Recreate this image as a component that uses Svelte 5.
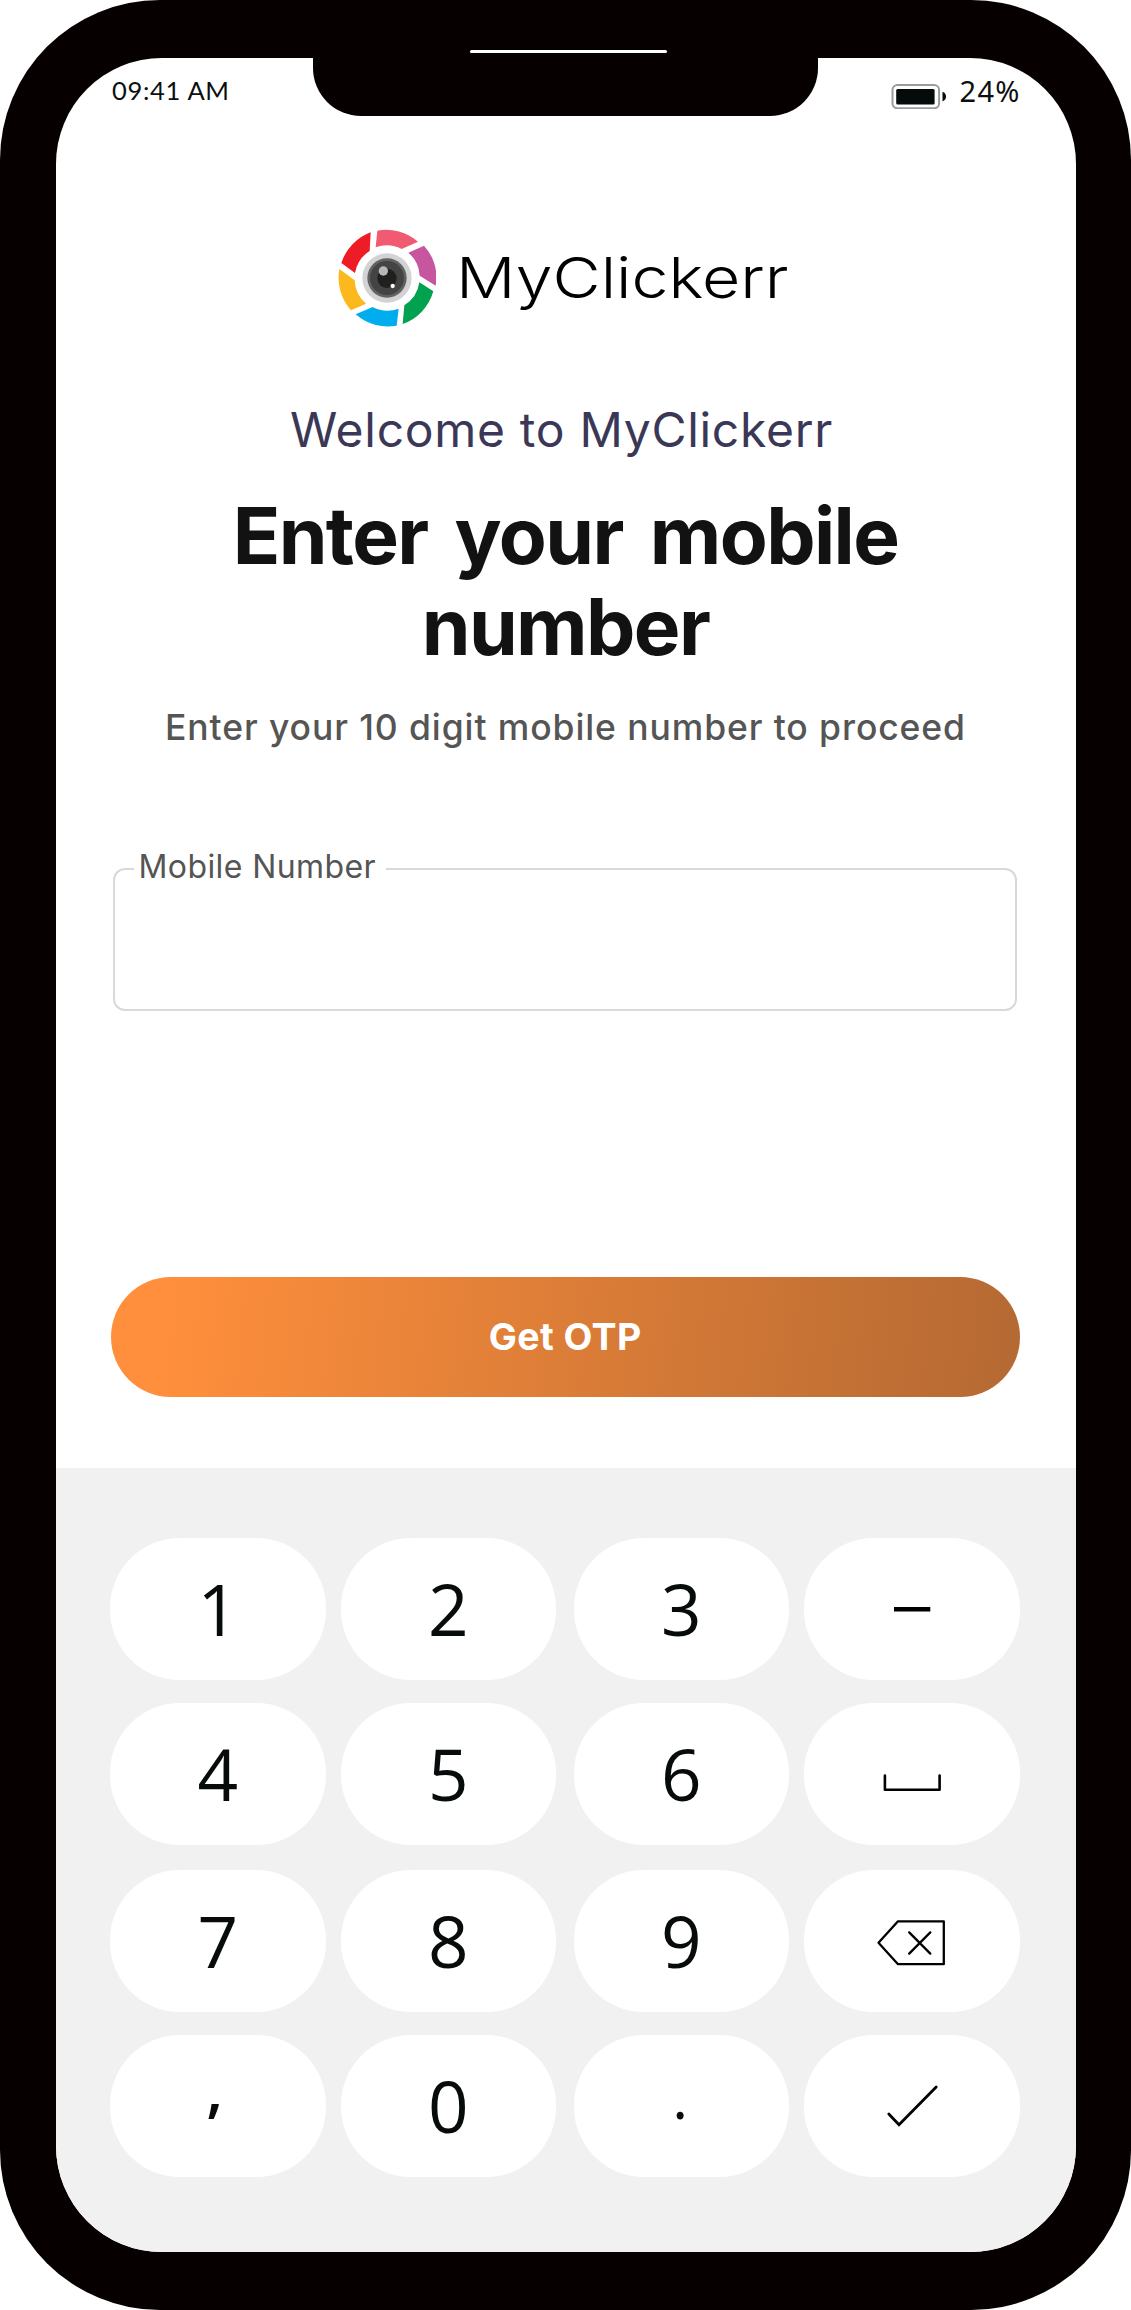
<script>
  const blades = [
    { color: '#ee1c25', d: 'M150 66A146 146 0 0 0 62 158L103 188A97 97 0 0 1 147 122Z' },
    { color: '#f05b72', d: 'M170 61A146 146 0 0 1 292 94L243 116A97 97 0 0 0 165 111Z' },
    { color: '#c6579f', d: 'M310 106A146 146 0 0 1 345 226L297 196A97 97 0 0 0 263 127Z' },
    { color: '#00a14f', d: 'M338 243A146 146 0 0 1 246 341L251 285A97 97 0 0 0 296 216Z' },
    { color: '#00adee', d: 'M228 346A146 146 0 0 1 105 312L156 290A97 97 0 0 0 234 295Z' },
    { color: '#fbb91d', d: 'M91 300A146 146 0 0 1 56 176L102 210A97 97 0 0 0 136 280Z' },
  ];

  const rows = [
    ['1', '2', '3', 'minus'],
    ['4', '5', '6', 'space'],
    ['7', '8', '9', 'backspace'],
    [',', '0', '.', 'enter'],
  ];

  // Each icon is drawn in a 90 x 60 box centred on its key.
  const icons = {
    minus: { d: 'M27 30.2H63.3', width: 4.4, cap: 'butt' },
    space: { d: 'M17.9 31.5V45.7H72.6V31.5', width: 2.6, cap: 'round' },
    backspace: {
      d: 'M11.5 31.7L31 10.3H76.8V53.2H31ZM42.2 21.4L63.3 42.6M63.3 21.4L42.2 42.6',
      width: 2.3,
      cap: 'round',
    },
    enter: { d: 'M21.8 38L32 48.8L69.2 11', width: 2.8, cap: 'round' },
  };
</script>

<main class="phone">
  <div class="screen">
    <header class="status">
      <span class="time">09:41 AM</span>
      <div class="power">
        <svg class="battery" viewBox="0 0 56 26" aria-hidden="true">
          <rect x="1.5" y="1.9" width="46.6" height="23.4" rx="5" fill="none" stroke="#9c9c9c" stroke-width="2" />
          <rect x="5.2" y="6" width="38.4" height="15.4" rx="1.5" fill="#050a0a" />
          <path d="M51.5 8.8Q55 10 55 13.6T51.5 18.4Z" fill="#050a0a" />
        </svg>
        <span class="percent">24%</span>
      </div>
    </header>

    <div class="brand">
      <svg class="wheel" viewBox="52 56 294 294" aria-hidden="true">
        {#each blades as blade}
          <path d={blade.d} fill={blade.color} />
        {/each}
        <circle cx="199" cy="203" r="74" fill="#d3d3d5" />
        <circle cx="199" cy="203" r="59" fill="#626262" />
        <circle cx="199" cy="203" r="51" fill="#444" />
        <circle cx="199" cy="204" r="29" fill="#20201e" />
        <circle cx="188" cy="182" r="14" fill="#b7b7b8" />
        <circle cx="216" cy="227" r="6.5" fill="#fff" />
      </svg>
      <span class="wordmark">MyClickerr</span>
    </div>

    <p class="welcome">Welcome to MyClickerr</p>
    <h1>Enter your mobile number</h1>
    <p class="hint">Enter your 10 digit mobile number to proceed</p>

    <div class="field"><span class="label">Mobile Number</span></div>

    <button class="submit">Get OTP</button>

    <section class="keypad">
      {#each rows as row}
        {#each row as key}
          <div class="key" class:dot={key === '.'} class:comma={key === ','}>
            {#if icons[key]}
              <svg class="icon" viewBox="0 0 90 60" aria-label={key}>
                <path
                  d={icons[key].d}
                  fill="none"
                  stroke="#000"
                  stroke-width={icons[key].width}
                  stroke-linecap={icons[key].cap}
                  stroke-linejoin={key === 'enter' ? 'miter' : 'round'}
                />
              </svg>
            {:else}
              {key}
            {/if}
          </div>
        {/each}
      {/each}
    </section>
  </div>
  <div class="notch"><span class="speaker"></span></div>
</main>

<style>
  :global(body) {
    background: #fff;
  }

  .phone {
    position: relative;
    box-sizing: border-box;
    width: 1131px;
    height: 2309.5px;
    padding: 57.5px 55.5px;
    border-radius: 160px;
    background: #060000;
    font-family: Inter, 'Open Sans', sans-serif;
  }

  .screen {
    display: flex;
    flex-direction: column;
    height: 100%;
    border-radius: 106px;
    background: #fff;
    overflow: hidden;
  }

  .notch {
    position: absolute;
    top: 0;
    left: 313px;
    display: flex;
    justify-content: center;
    box-sizing: border-box;
    width: 504.7px;
    height: 116px;
    padding: 50px 0 0 6px;
    border-radius: 0 0 48px 48px;
    background: #060000;
  }

  .speaker {
    width: 197px;
    height: 3.4px;
    border-radius: 2px;
    background: #fff;
  }

  .status {
    display: flex;
    justify-content: space-between;
    box-sizing: border-box;
    height: 70px;
    padding: 12px 55px 0 56.5px;
    color: #0b0f10;
    line-height: 40px;
  }

  .time {
    font-family: Lato, sans-serif;
    font-size: 25.5px;
    letter-spacing: 0.7px;
  }

  .power {
    display: flex;
    gap: 13px;
  }

  .battery {
    width: 56px;
    height: 26px;
    margin-top: 13px;
  }

  .percent {
    margin-top: 1.2px;
    font-family: 'Noto Sans', 'Open Sans', sans-serif;
    font-size: 29px;
    letter-spacing: 1.2px;
  }

  .brand {
    display: flex;
    height: 98px;
    margin: 101.3px 0 0 282.3px;
  }

  .wheel {
    width: 98px;
    height: 98px;
  }

  .wordmark {
    margin: 19.4px 0 0 20px;
    color: #000;
    font-size: 56.5px;
    font-weight: 300;
    line-height: 60px;
    transform: scaleX(1.17);
    transform-origin: left;
  }

  .welcome {
    margin: 73.2px 8px 0 0;
    color: #3b3857;
    font-size: 48px;
    font-weight: 400;
    line-height: 60px;
    letter-spacing: 0.7px;
    text-align: center;
  }

  h1 {
    margin: 30px 130px 0;
    color: #121212;
    font-size: 78.4px;
    font-weight: 700;
    line-height: 91px;
    letter-spacing: -1.6px;
    word-spacing: 10px;
    text-align: center;
  }

  .hint {
    margin: 30.8px 0 0;
    color: #555;
    font-size: 35.5px;
    font-weight: 500;
    line-height: 50px;
    letter-spacing: 0.9px;
    text-align: center;
    white-space: nowrap;
  }

  .field {
    position: relative;
    flex: none;
    box-sizing: border-box;
    height: 143px;
    margin: 115.2px 58.5px 0 57.5px;
    border: 2px solid #d9d9d9;
    border-radius: 12px;
  }

  .label {
    position: absolute;
    top: -23px;
    left: 19px;
    box-sizing: border-box;
    width: 252px;
    padding-left: 4.5px;
    background: #fff;
    color: #555;
    font-size: 32px;
    line-height: 40px;
    letter-spacing: 0.4px;
    white-space: nowrap;
  }

  .submit {
    flex: none;
    height: 119.7px;
    margin: 266px 55.5px 0 55px;
    padding: 0;
    border: 0;
    border-radius: 60px;
    background: linear-gradient(96deg, #ff8f3c 6%, #b66a33 98%);
    color: #fff;
    font-family: inherit;
    font-size: 37.5px;
    font-weight: 700;
    letter-spacing: 0.4px;
  }

  .keypad {
    display: grid;
    flex: 1;
    grid-template-columns: 230.5px 233px 230.5px 215.5px;
    grid-template-rows: 164.5px 167px 165px 142px;
    align-content: start;
    margin-top: 71.3px;
    padding: 70.5px 54.5px 0;
    background: #f1f1f1;
  }

  .key {
    display: flex;
    align-items: center;
    justify-content: center;
    box-sizing: border-box;
    width: 215.5px;
    height: 142px;
    border-radius: 70px;
    background: #fff;
    color: #070b0b;
    font-family: 'Open Sans', 'Noto Sans', sans-serif;
    font-size: 71px;
    line-height: 96px;
  }

  .dot {
    align-items: flex-end;
    padding: 0 2px 33px 0;
    font-size: 60px;
  }

  .comma {
    align-items: flex-end;
    padding: 0 6px 42.4px 0;
    font-size: 62px;
    font-weight: 600;
  }

  .icon {
    width: 90px;
    height: 60px;
  }
</style>
